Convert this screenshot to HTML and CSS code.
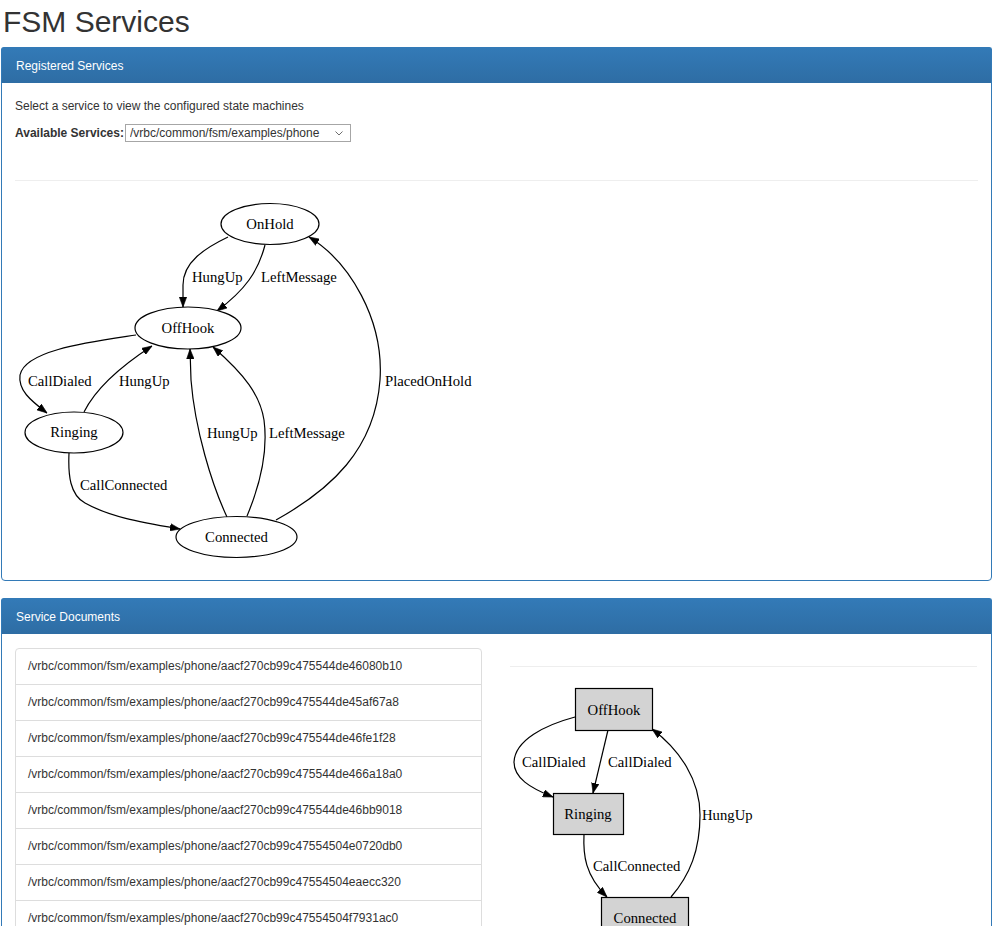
FILE: index.html
```html
<!DOCTYPE html>
<html lang="en">
<head>
  <meta charset="UTF-8" />
  <title>FSM Services</title>
  <link rel="stylesheet" href="styles.css">
</head>
<body>
<div class="page">

  <h1 class="page-title">FSM Services</h1>

  <div class="panel">
    <div class="panel-heading">Registered Services</div>
    <div class="panel-body services">
      <p class="hint">Select a service to view the configured state machines</p>
      <div class="field">
        <label for="service">Available Services:</label>
        <div class="select-wrap">
          <select id="service">
            <option>/vrbc/common/fsm/examples/phone</option>
          </select>
          <svg class="chevron" width="8" height="5" viewBox="0 0 8 5"><polyline points="0.5,0.5 4,4 7.5,0.5" fill="none" stroke="#6d6d6d" stroke-width="1"/></svg>
        </div>
      </div>
      <hr class="divider divider-top">

      <!-- service state machine -->
      <svg class="fsm-graph" width="480" height="386" viewBox="15 181 480 386">
        <defs>
          <marker id="arrow" markerWidth="10" markerHeight="8" refX="10" refY="4" orient="auto" markerUnits="userSpaceOnUse">
            <path d="M0,0.3 L10,4 L0,7.7 z" fill="#000" stroke="#000" stroke-width="0.6"/>
          </marker>
        </defs>
        <g class="edges">
          <path d="M228,237 C205,248 183,262 183,285 L183,307" marker-end="url(#arrow)"/>
          <path d="M265,245 C258,272 245,290 217,311" marker-end="url(#arrow)"/>
          <path d="M276,520 C330,490 375,450 380,380 C384,320 350,262 309,237" marker-end="url(#arrow)"/>
          <path d="M136,335 C90,342 25,350 20,375 C18,390 30,400 47,413" marker-end="url(#arrow)"/>
          <path d="M84,412 C94,392 115,370 152,346" marker-end="url(#arrow)"/>
          <path d="M227,517 C212,485 195,430 191,380 L190,349" marker-end="url(#arrow)"/>
          <path d="M247,516 C260,485 268,450 264,420 C260,395 245,375 213,347" marker-end="url(#arrow)"/>
          <path d="M69,453 C68,475 70,495 85,503 C110,517 140,522 180,529" marker-end="url(#arrow)"/>
        </g>
        <g class="nodes">
          <ellipse cx="270" cy="224" rx="49" ry="20.5"/>
          <ellipse cx="188" cy="328" rx="53" ry="21"/>
          <ellipse cx="74" cy="432.5" rx="49" ry="20.5"/>
          <ellipse cx="236.5" cy="537" rx="60.5" ry="20.5"/>
        </g>
        <g class="node-labels">
          <text x="270" y="228.5">OnHold</text>
          <text x="188" y="332.5">OffHook</text>
          <text x="74" y="437">Ringing</text>
          <text x="236.5" y="541.5">Connected</text>
        </g>
        <g class="edge-labels">
          <text x="192" y="282">HungUp</text>
          <text x="261" y="282">LeftMessage</text>
          <text x="28" y="386">CallDialed</text>
          <text x="119" y="386">HungUp</text>
          <text x="385" y="386">PlacedOnHold</text>
          <text x="207" y="438">HungUp</text>
          <text x="269" y="438">LeftMessage</text>
          <text x="80" y="490">CallConnected</text>
        </g>
      </svg>
    </div>
  </div>

  <div class="panel">
    <div class="panel-heading">Service Documents</div>
    <div class="panel-body docs">
      <div class="list-group">
        <a class="list-group-item">/vrbc/common/fsm/examples/phone/aacf270cb99c475544de46080b10</a>
        <a class="list-group-item">/vrbc/common/fsm/examples/phone/aacf270cb99c475544de45af67a8</a>
        <a class="list-group-item">/vrbc/common/fsm/examples/phone/aacf270cb99c475544de46fe1f28</a>
        <a class="list-group-item">/vrbc/common/fsm/examples/phone/aacf270cb99c475544de466a18a0</a>
        <a class="list-group-item">/vrbc/common/fsm/examples/phone/aacf270cb99c475544de46bb9018</a>
        <a class="list-group-item">/vrbc/common/fsm/examples/phone/aacf270cb99c47554504e0720db0</a>
        <a class="list-group-item">/vrbc/common/fsm/examples/phone/aacf270cb99c47554504eaecc320</a>
        <a class="list-group-item">/vrbc/common/fsm/examples/phone/aacf270cb99c47554504f7931ac0</a>
      </div>

      <div class="doc-view">
        <hr class="divider divider-doc">
        <!-- document state -->
        <svg class="fsm-graph" width="320" height="280" viewBox="510 667 320 280">
          <defs>
            <marker id="arrow2" markerWidth="10" markerHeight="8" refX="10" refY="4" orient="auto" markerUnits="userSpaceOnUse">
              <path d="M0,0.3 L10,4 L0,7.7 z" fill="#000" stroke="#000" stroke-width="0.6"/>
            </marker>
          </defs>
          <g class="edges">
            <path d="M575,717 C545,725 515,740 514,762 C514,778 530,788 553,797" marker-end="url(#arrow2)"/>
            <path d="M608,730 L593,793" marker-end="url(#arrow2)"/>
            <path d="M584,834 C583,855 585,875 607,897" marker-end="url(#arrow2)"/>
            <path d="M671,897 C690,875 700,850 700,815 C700,780 680,750 652,729" marker-end="url(#arrow2)"/>
          </g>
          <g class="boxes">
            <rect x="575.5" y="688.5" width="77" height="42"/>
            <rect x="553.5" y="793.5" width="70" height="41"/>
            <rect x="601.5" y="897.5" width="87" height="41"/>
          </g>
          <g class="node-labels">
            <text x="614" y="715">OffHook</text>
            <text x="588" y="819">Ringing</text>
            <text x="645" y="923">Connected</text>
          </g>
          <g class="edge-labels">
            <text x="522" y="767">CallDialed</text>
            <text x="608" y="767">CallDialed</text>
            <text x="593" y="871">CallConnected</text>
            <text x="702" y="820">HungUp</text>
          </g>
        </svg>
      </div>
    </div>
  </div>

</div>
</body>
</html>
```

FILE: styles.css
```css
body {
  margin: 0;
  font-family: "Liberation Sans", Arial, Helvetica, sans-serif;
  font-size: 12px;
  line-height: 17px;
  color: #333;
  background-color: #fff;
}

.page {
  margin-left: 1px;
  width: 991px;
}

.page-title {
  margin: 5px 0 9px 2px;
  font-size: 30px;
  line-height: 33px;
  font-weight: normal;
  color: #333;
}

.panel {
  border: 1px solid #337ab7;
  border-radius: 4px;
  margin-bottom: 17px;
  background-color: #fff;
}

.panel-heading {
  padding: 10px 14px 8px;
  color: #fff;
  background-image: linear-gradient(to bottom, #337ab7 0, #2e6da4 100%);
  border-top-left-radius: 3px;
  border-top-right-radius: 3px;
  margin: -1px -1px 0;
  border: 1px solid #337ab7;
  border-bottom: 0;
}

.panel-body {
  padding: 13px;
}

.services {
  padding-top: 15px;
}

.hint {
  margin: 0 0 9px;
}

.field {
  display: flex;
  align-items: center;
  height: 18px;
}

.field label {
  font-weight: bold;
  margin-right: 1px;
}

.select-wrap {
  position: relative;
  height: 18px;
}

.select-wrap select {
  appearance: none;
  -webkit-appearance: none;
  width: 226px;
  height: 18px;
  margin: 0;
  padding: 0 4px;
  border: 1px solid #a6a6a6;
  border-radius: 0;
  background-color: #fff;
  font-family: "Liberation Sans", Arial, sans-serif;
  font-size: 12px;
  line-height: 16px;
  color: #333;
}

.chevron {
  position: absolute;
  right: 8px;
  top: 7px;
}

.divider {
  border: 0;
  border-top: 1px solid #eee;
  height: 0;
  margin: 0;
}

.divider-top {
  margin-top: 38px;
}

.divider-doc {
  margin-top: 18px;
}

.fsm-graph {
  display: block;
  overflow: hidden;
}

.fsm-graph .edges path {
  fill: none;
  stroke: #000;
  stroke-width: 1.2;
}

.fsm-graph .nodes ellipse {
  fill: #fff;
  stroke: #000;
  stroke-width: 1.2;
}

.fsm-graph .boxes rect {
  fill: #d3d3d3;
  stroke: #000;
  stroke-width: 1.2;
}

.fsm-graph text {
  font-family: "Liberation Serif", "Times New Roman", serif;
  font-size: 14.7px;
  fill: #000;
}

.fsm-graph .node-labels text {
  text-anchor: middle;
}

.docs {
  display: grid;
  grid-template-columns: 467px 467px;
  column-gap: 28px;
  align-items: start;
  padding-top: 14px;
}

.list-group {
  border: 1px solid #ddd;
  border-radius: 4px;
}

.list-group-item {
  display: block;
  padding: 9px 12px;
  border-top: 1px solid #ddd;
  color: #333;
  text-decoration: none;
}

.list-group-item:first-child {
  border-top: 0;
}
```
